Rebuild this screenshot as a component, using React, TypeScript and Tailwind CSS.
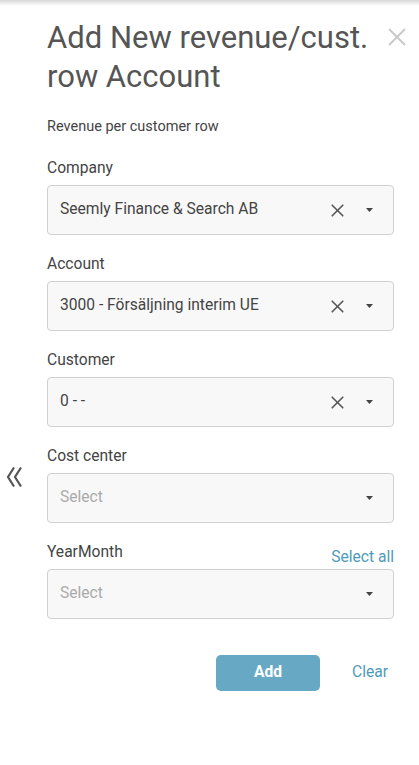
import React from "react";

const font = { fontFamily: "Roboto, 'Noto Sans', sans-serif" };

function ClearIcon() {
  return (
    <svg width="13" height="13" viewBox="0 0 13 13" className="block">
      <path d="M1.2 1.2 L11.8 11.8 M11.8 1.2 L1.2 11.8" stroke="#555" strokeWidth="1.6" strokeLinecap="round" />
    </svg>
  );
}

function Caret() {
  return (
    <svg width="7" height="4" viewBox="0 0 7 4" className="block">
      <path d="M0 0 L7 0 L3.5 4 Z" fill="#444" />
    </svg>
  );
}

function Field({ label, value, right }: { label: string; value?: string; right?: React.ReactNode }) {
  return (
    <div className="flex flex-col">
      <div className="flex items-end justify-between h-[20px] mb-[7px]">
        <span className="text-[15.6px] text-[#444] leading-[20px]">{label}</span>
        {right}
      </div>
      <div className="h-[50px] rounded-[4px] border border-[#d0d0d0] bg-[#f8f8f8] flex items-center pl-[12px] pr-[20px]">
        <span className={"flex-1 text-[15.6px] " + (value ? "text-[#444]" : "text-[#aaa]")}>{value ?? "Select"}</span>
        {value ? (
          <span className="mr-[22px]">
            <ClearIcon />
          </span>
        ) : null}
        <Caret />
      </div>
    </div>
  );
}

export default function App() {
  return (
    <div className="w-[419px] h-[765px] bg-white relative overflow-hidden" style={font}>
      <div className="absolute top-0 left-0 right-0 h-[6px] bg-gradient-to-b from-[#d8d8d8] to-white" />
      <svg className="absolute left-[6px] top-[466px]" width="17" height="22" viewBox="0 0 17 22">
        <path d="M8 1.5 L2 11 L8 20.5 M15 1.5 L9 11 L15 20.5" stroke="#555" strokeWidth="2.2" fill="none" />
      </svg>
      <button className="absolute right-[12px] top-[27px] w-[20px] h-[20px] flex items-center justify-center">
        <svg width="18" height="18" viewBox="0 0 18 18">
          <path d="M1 1 L17 17 M17 1 L1 17" stroke="#c8c8c8" strokeWidth="1.8" />
        </svg>
      </button>
      <div className="pl-[47px] pr-[25px] pt-[18px]">
        <h1 className="text-[31px] leading-[39px] text-[#555] font-normal pr-[18px]">
          Add New revenue/cust. row Account
        </h1>
        <p className="mt-[21px] text-[14.5px] text-[#444] leading-[20px]">Revenue per customer row</p>
        <div className="mt-[21px] flex flex-col gap-[19px]">
          <Field label="Company" value="Seemly Finance & Search AB" />
          <Field label="Account" value="3000 - Försäljning interim UE" />
          <Field label="Customer" value="0 - -" />
          <Field label="Cost center" />
          <Field
            label="YearMonth"
            right={<span className="text-[15.6px] text-[#4e9bb9] leading-[20px] translate-y-[5px]">Select all</span>}
          />
        </div>
        <div className="mt-[36px] flex items-center justify-end gap-[32px] pr-[6px]">
          <button className="w-[104px] h-[36px] rounded-[5px] bg-[#67a9c4] text-white font-bold text-[15.6px]">Add</button>
          <span className="text-[15.6px] text-[#4e9bb9]">Clear</span>
        </div>
      </div>
    </div>
  );
}
